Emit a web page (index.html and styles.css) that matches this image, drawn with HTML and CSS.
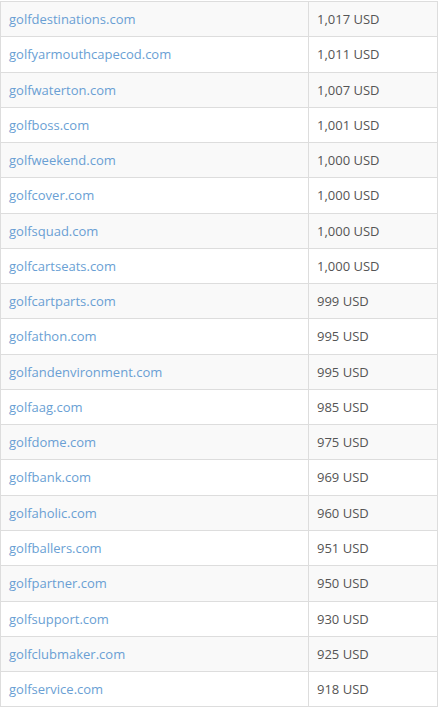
FILE: index.html
```
<!DOCTYPE html>
<html>
  <head>
    <title>Golf domains</title>
    <link rel="stylesheet" href="styles.css">
  </head>
  <body>
    <table class="sales">
      <tbody>
        <tr><td><a href="#">golfdestinations.com</a></td><td>1,017 USD</td></tr>
        <tr><td><a href="#">golfyarmouthcapecod.com</a></td><td>1,011 USD</td></tr>
        <tr><td><a href="#">golfwaterton.com</a></td><td>1,007 USD</td></tr>
        <tr><td><a href="#">golfboss.com</a></td><td>1,001 USD</td></tr>
        <tr><td><a href="#">golfweekend.com</a></td><td>1,000 USD</td></tr>
        <tr><td><a href="#">golfcover.com</a></td><td>1,000 USD</td></tr>
        <tr><td><a href="#">golfsquad.com</a></td><td>1,000 USD</td></tr>
        <tr><td><a href="#">golfcartseats.com</a></td><td>1,000 USD</td></tr>
        <tr><td><a href="#">golfcartparts.com</a></td><td>999 USD</td></tr>
        <tr><td><a href="#">golfathon.com</a></td><td>995 USD</td></tr>
        <tr><td><a href="#">golfandenvironment.com</a></td><td>995 USD</td></tr>
        <tr><td><a href="#">golfaag.com</a></td><td>985 USD</td></tr>
        <tr><td><a href="#">golfdome.com</a></td><td>975 USD</td></tr>
        <tr><td><a href="#">golfbank.com</a></td><td>969 USD</td></tr>
        <tr><td><a href="#">golfaholic.com</a></td><td>960 USD</td></tr>
        <tr><td><a href="#">golfballers.com</a></td><td>951 USD</td></tr>
        <tr><td><a href="#">golfpartner.com</a></td><td>950 USD</td></tr>
        <tr><td><a href="#">golfsupport.com</a></td><td>930 USD</td></tr>
        <tr><td><a href="#">golfclubmaker.com</a></td><td>925 USD</td></tr>
        <tr><td><a href="#">golfservice.com</a></td><td>918 USD</td></tr>
      </tbody>
    </table>
  </body>
</html>
```

FILE: styles.css
```
body {
  margin: 0;
  padding-top: 1px;
  background: #fff;
  font-family: "Open Sans", Arial, sans-serif;
  font-size: 13px;
  color: #555;
}

.sales {
  width: 438px;
  border-collapse: collapse;
  border: 1px solid #ddd;
}
.sales td {
  padding: 8px 8px;
  line-height: 18.26px;
  border-top: 1px solid #ddd;
  text-align: left;
  vertical-align: middle;
}
.sales td:first-child { width: 291px; }
.sales td + td { border-left: 1px solid #ddd; }
.sales tr:nth-child(odd) td { background: #f9f9f9; }
.sales a { color: #6a9fd4; text-decoration: none; }
```
